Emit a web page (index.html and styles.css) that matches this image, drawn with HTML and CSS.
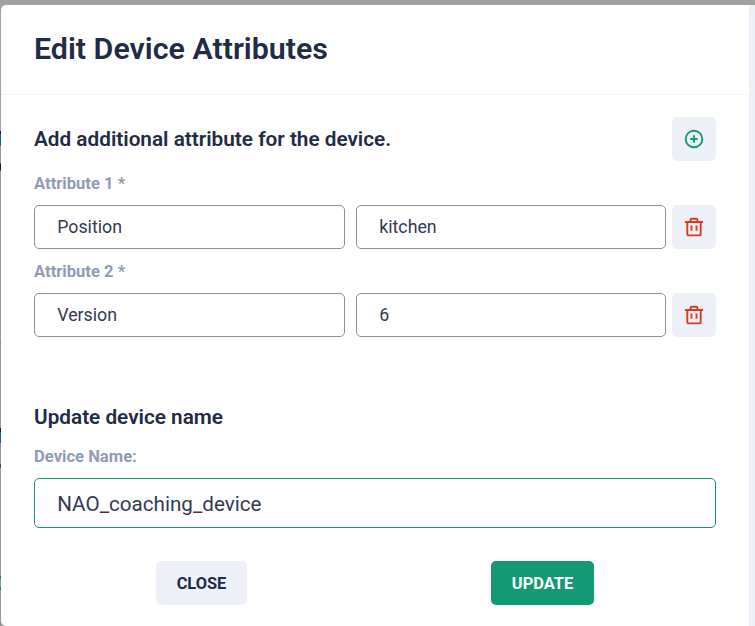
FILE: index.html
```html
<!DOCTYPE html>
<html lang="en">
<head>
<meta charset="utf-8">
<title>Edit Device Attributes</title>
<link rel="stylesheet" href="styles.css">
</head>
<body>
<main class="modal">
  <header class="modal-header"><h1>Edit Device Attributes</h1></header>
  <form class="modal-body">
    <div class="section-head">
      <h2>Add additional attribute for the device.</h2>
      <button type="button" class="icon-btn add" aria-label="Add attribute">
        <svg width="20" height="20" viewBox="0 0 20 20"><circle cx="10" cy="10" r="8.3"/><path d="M10 6.3v7.4M6.3 10h7.4"/></svg>
      </button>
    </div>
    <label class="label" for="a1">Attribute 1 *</label>
    <div class="row">
      <input id="a1" class="field" value="Position">
      <input class="field" value="kitchen" aria-label="Value 1">
      <button type="button" class="icon-btn remove" aria-label="Remove">
        <svg width="20" height="20" viewBox="0 0 20 20"><path d="M1 5h18M3.3 5v11.8q0 1.6 1.6 1.6h10.2q1.6 0 1.6-1.6V5M6.5 5V3.2q0-1.4 1.4-1.4h4.2q1.4 0 1.4 1.4V5M7.5 8.6v5.2M12.5 8.6v5.2"/></svg>
      </button>
    </div>
    <label class="label" for="a2">Attribute 2 *</label>
    <div class="row">
      <input id="a2" class="field" value="Version">
      <input class="field" value="6" aria-label="Value 2">
      <button type="button" class="icon-btn remove" aria-label="Remove">
        <svg width="20" height="20" viewBox="0 0 20 20"><path d="M1 5h18M3.3 5v11.8q0 1.6 1.6 1.6h10.2q1.6 0 1.6-1.6V5M6.5 5V3.2q0-1.4 1.4-1.4h4.2q1.4 0 1.4 1.4V5M7.5 8.6v5.2M12.5 8.6v5.2"/></svg>
      </button>
    </div>
    <h2 class="name-title">Update device name</h2>
    <label class="label name-label" for="name">Device Name:</label>
    <input id="name" class="field name-field" value="NAO_coaching_device">
    <div class="actions">
      <button type="button" class="btn close">CLOSE</button>
      <button type="button" class="btn update">UPDATE</button>
    </div>
  </form>
</main>
</body>
</html>
```
FILE: styles.css
```css
* { box-sizing: border-box; }
html { height: 100%; overflow: hidden; }
body {
  margin: 0;
  height: 626px;
  padding: 5px 0 0 1px;
  overflow: hidden;
  font-family: Roboto, sans-serif;
  color: #222b45;
  background: linear-gradient(#a1a1a1 0 131px, #1b1838 131px 134px, #126591 134px 146px, #999 146px 163px, #8c4a3c 163px 164px, #17142e 164px 170px, #8c4a3c 170px 171px, #999 171px 342px, #777 342px 343px, #999 343px 428px, #241d42 428px 432px, #126591 432px 443px, #999 443px 461px, #a58252 461px 462px, #999 462px 464px, #7b353c 464px 468px, #999 468px 576px, #168d67 576px 579px, #999 579px 587px, #168d67 587px 590px, #999 590px);
}
.modal {
  height: 621px;
  background: #fff;
  border-right: 6px solid #edf0f7;
  border-radius: 5px 0 0 5px;
}
.modal-header {
  height: 90px;
  padding: 24px 33px 0;
  border-bottom: 1px solid #f4f5f7;
}
h1, h2 { margin: 0; font-weight: 600; }
h1 { font-size: 30.4px; line-height: 40px; }
h2 { font-size: 20.75px; line-height: 24px; }
.modal-body { padding: 22px 33px 0; }
.section-head { display: flex; align-items: center; justify-content: space-between; height: 44px; }
.label {
  display: block;
  height: 44px;
  padding-top: 13px;
  font-size: 16.6px;
  line-height: 20px;
  font-weight: 700;
  color: #8f9bb3;
}
.row { display: grid; grid-template-columns: 311px 310px 44px; column-gap: 11px; height: 44px; }
.row .icon-btn { margin-left: -5px; }
.field {
  width: 100%;
  min-width: 0;
  height: 44px;
  margin: 0;
  padding: 0 22.2px 1px;
  border: 1px solid #8f8f8f;
  border-radius: 5px;
  outline: 0;
  background: #fff;
  color: #323a53;
  font: 400 17.8px/24px Roboto, sans-serif;
}
.icon-btn {
  width: 44px;
  height: 44px;
  padding: 0;
  display: grid;
  place-items: center;
  border: 0;
  border-radius: 5px;
  background: #edf0f7;
}
.icon-btn svg { fill: none; stroke: currentColor; stroke-width: 1.9; }
.add { color: #149975; }
.remove { color: #db3b25; }
.name-title { margin-top: 68px; }
.name-label { height: 49px; padding-top: 18px; }
.name-field { display: block; height: 50px; padding-bottom: 0; padding-top: 1px; border-color: #149975; font-size: 20.65px; }
.actions { display: flex; justify-content: space-between; padding: 33px 122px 0; }
.btn { height: 44px; padding: 1px 0 0; border: 0; border-radius: 5px; font: 700 16.4px/20px Roboto, sans-serif; }
.close { width: 91px; background: #edf0f7; color: #222b45; }
.update { width: 103px; background: #149975; color: #fff; }
```
